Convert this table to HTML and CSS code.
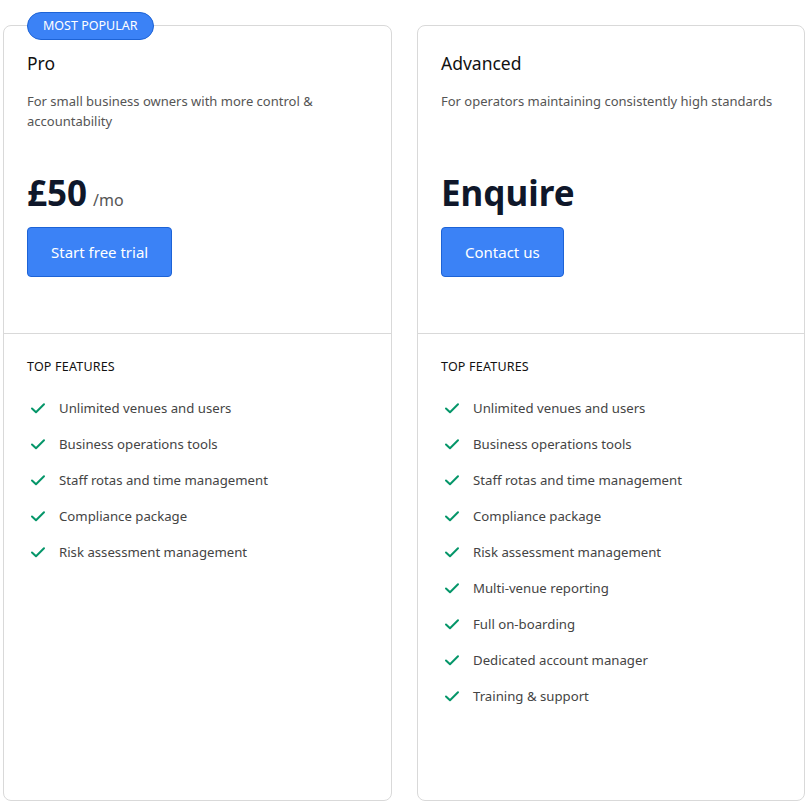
FILE: index.html
```html
<!DOCTYPE html>
<html lang="en">
<head>
<meta charset="utf-8">
<title>Pricing</title>
<link rel="stylesheet" href="styles.css">
</head>
<body>
<div class="plans">
  <section class="card">
    <span class="badge">MOST POPULAR</span>
    <div class="card-top">
      <h2 class="plan-name">Pro</h2>
      <p class="plan-desc">For small business owners with more control &amp; accountability</p>
      <div class="price"><span class="amount">£50</span><span class="per">/mo</span></div>
      <a class="btn" href="#">Start free trial</a>
    </div>
    <div class="card-features">
      <h3 class="features-title">TOP FEATURES</h3>
      <ul class="features">
        <li><svg class="check" viewBox="0 0 16 16"><path d="M2 8.5 6 12.3 14 4.3"/></svg>Unlimited venues and users</li>
        <li><svg class="check" viewBox="0 0 16 16"><path d="M2 8.5 6 12.3 14 4.3"/></svg>Business operations tools</li>
        <li><svg class="check" viewBox="0 0 16 16"><path d="M2 8.5 6 12.3 14 4.3"/></svg>Staff rotas and time management</li>
        <li><svg class="check" viewBox="0 0 16 16"><path d="M2 8.5 6 12.3 14 4.3"/></svg>Compliance package</li>
        <li><svg class="check" viewBox="0 0 16 16"><path d="M2 8.5 6 12.3 14 4.3"/></svg>Risk assessment management</li>
      </ul>
    </div>
  </section>
  <section class="card">
    <div class="card-top">
      <h2 class="plan-name">Advanced</h2>
      <p class="plan-desc">For operators maintaining consistently high standards</p>
      <div class="price"><span class="amount">Enquire</span></div>
      <a class="btn" href="#">Contact us</a>
    </div>
    <div class="card-features">
      <h3 class="features-title">TOP FEATURES</h3>
      <ul class="features">
        <li><svg class="check" viewBox="0 0 16 16"><path d="M2 8.5 6 12.3 14 4.3"/></svg>Unlimited venues and users</li>
        <li><svg class="check" viewBox="0 0 16 16"><path d="M2 8.5 6 12.3 14 4.3"/></svg>Business operations tools</li>
        <li><svg class="check" viewBox="0 0 16 16"><path d="M2 8.5 6 12.3 14 4.3"/></svg>Staff rotas and time management</li>
        <li><svg class="check" viewBox="0 0 16 16"><path d="M2 8.5 6 12.3 14 4.3"/></svg>Compliance package</li>
        <li><svg class="check" viewBox="0 0 16 16"><path d="M2 8.5 6 12.3 14 4.3"/></svg>Risk assessment management</li>
        <li><svg class="check" viewBox="0 0 16 16"><path d="M2 8.5 6 12.3 14 4.3"/></svg>Multi-venue reporting</li>
        <li><svg class="check" viewBox="0 0 16 16"><path d="M2 8.5 6 12.3 14 4.3"/></svg>Full on-boarding</li>
        <li><svg class="check" viewBox="0 0 16 16"><path d="M2 8.5 6 12.3 14 4.3"/></svg>Dedicated account manager</li>
        <li><svg class="check" viewBox="0 0 16 16"><path d="M2 8.5 6 12.3 14 4.3"/></svg>Training &amp; support</li>
      </ul>
    </div>
  </section>
</div>
</body>
</html>
```
FILE: styles.css
```css
* { box-sizing: border-box; }
html, body { margin: 0; padding: 0; background: #fff; }
body {
  font-family: "Noto Sans", "Open Sans", Arial, sans-serif;
  color: #111827;
}
.plans {
  display: grid;
  grid-template-columns: 389px 388px;
  column-gap: 25px;
  padding: 25px 0 0 3px;
}
.card {
  position: relative;
  border: 1px solid #d9d9d9;
  border-radius: 8px;
  min-height: 776px;
  background: #fff;
}
.badge {
  position: absolute;
  top: -14px;
  left: 23px;
  height: 28px;
  padding: 0 15px;
  display: flex;
  align-items: center;
  background: #3b82f6;
  border: 1px solid #1d63d6;
  border-radius: 14px;
  color: #fff;
  font-size: 12.5px;
  line-height: 1;
}
.card-top {
  padding: 23px 23px 56px;
  border-bottom: 1px solid #d9d9d9;
}
.plan-name {
  margin: 0;
  font-size: 17.5px;
  font-weight: 400;
  line-height: 28px;
  color: #111;
}
.plan-desc {
  margin: 14px 0 0;
  font-size: 13px;
  line-height: 20px;
  min-height: 40px;
  color: #555;
}
.price {
  margin-top: 42px;
  display: flex;
  align-items: baseline;
  height: 40px;
}
.amount {
  font-size: 35px;
  font-weight: 700;
  line-height: 40px;
  color: #0f172a;
}
.per {
  margin-left: 6px;
  font-size: 16px;
  color: #555;
}
.btn {
  display: inline-block;
  margin-top: 14px;
  padding: 12px 23px;
  background: #3b82f6;
  border: 1px solid #1d63d6;
  border-radius: 4px;
  color: #fff;
  font-size: 15px;
  line-height: 24px;
  text-decoration: none;
}
.card-features {
  padding: 25px 23px 24px;
}
.features-title {
  margin: 0;
  font-size: 12.5px;
  font-weight: 400;
  line-height: 16px;
  letter-spacing: 0.2px;
  color: #111;
}
.features {
  list-style: none;
  margin: 15px 0 0;
  padding: 0;
}
.features li {
  display: flex;
  align-items: center;
  height: 36px;
  font-size: 13.2px;
  color: #444;
}
.check {
  width: 16px;
  height: 16px;
  margin: 0 13px 0 3px;
  fill: none;
  stroke: #059669;
  stroke-width: 2;
  stroke-linecap: round;
  stroke-linejoin: round;
}
```
